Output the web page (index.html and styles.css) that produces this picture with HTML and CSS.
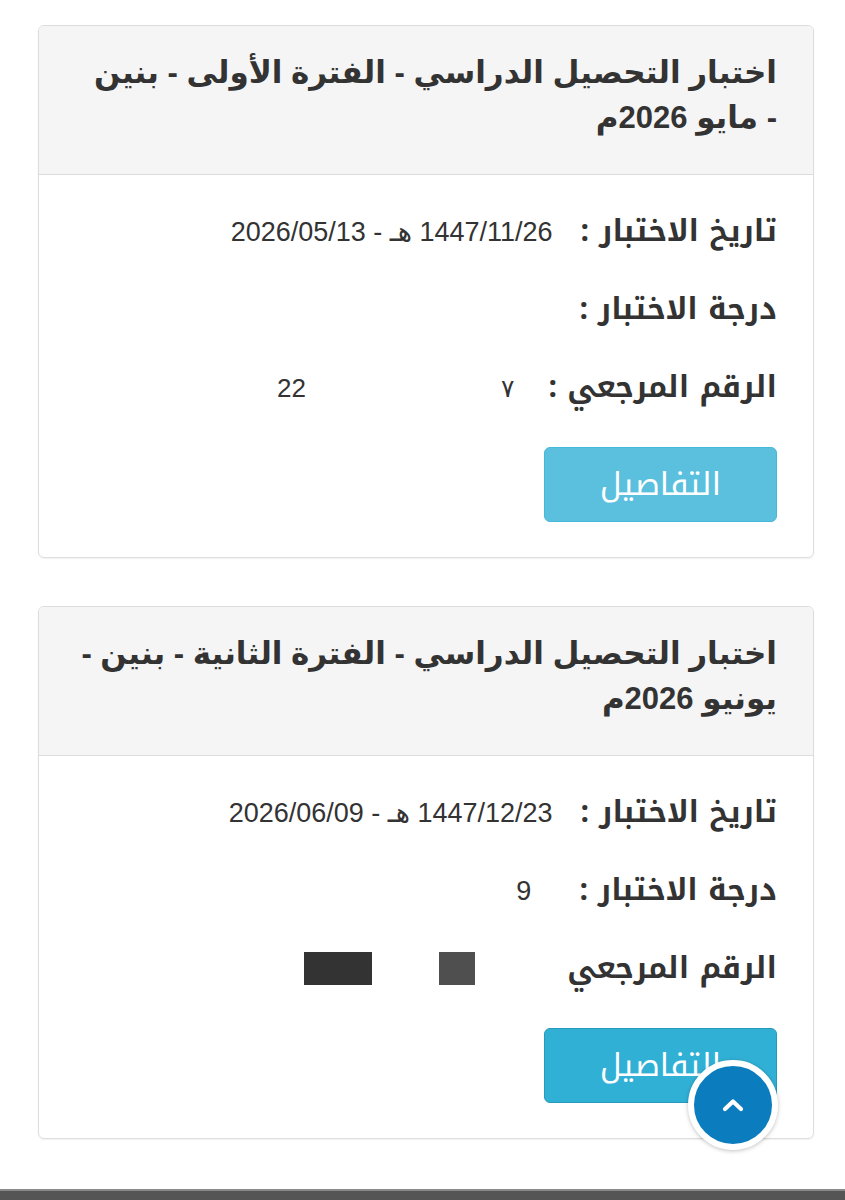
FILE: index.html
```html
<!DOCTYPE html>
<html lang="ar" dir="rtl">
<head>
<meta charset="utf-8">
<title>نتائج الاختبارات</title>
<link rel="stylesheet" href="styles.css">
</head>
<body>
<main class="page">
  <section class="card">
    <header class="card-head">
      <h3 class="card-title">اختبار التحصيل الدراسي - الفترة الأولى - بنين<br>- مايو 2026م</h3>
    </header>
    <div class="card-body">
      <div class="row"><span class="label">تاريخ الاختبار :</span><span class="value">1447/11/26 هـ - 2026/05/13</span></div>
      <div class="row"><span class="label">درجة الاختبار :</span><span class="value"></span></div>
      <div class="row"><span class="label">الرقم المرجعي :</span><span class="value ref"><span class="ref-a">٧</span><span class="ref-gap"></span><span class="ref-b">22</span></span></div>
      <div class="actions"><a class="btn" href="#">التفاصيل</a></div>
    </div>
  </section>

  <section class="card">
    <header class="card-head">
      <h3 class="card-title">اختبار التحصيل الدراسي - الفترة الثانية - بنين -<br>يونيو 2026م</h3>
    </header>
    <div class="card-body">
      <div class="row"><span class="label">تاريخ الاختبار :</span><span class="value">1447/12/23 هـ - 2026/06/09</span></div>
      <div class="row"><span class="label">درجة الاختبار :</span><span class="value grade">9</span></div>
      <div class="row"><span class="label">الرقم المرجعي</span><span class="value redact"><span class="blk blk-a"></span><span class="blk blk-b"></span></span></div>
      <div class="actions"><a class="btn btn-active" href="#">التفاصيل</a></div>
    </div>
  </section>
</main>
<footer class="footer"></footer>
<a class="to-top" href="#" aria-label="أعلى">
  <svg width="22" height="14" viewBox="0 0 22 14"><path d="M3 11 L11 3.5 L19 11" fill="none" stroke="#fff" stroke-width="4.2" stroke-linecap="round" stroke-linejoin="round"/></svg>
</a>
</body>
</html>
```

FILE: styles.css
```css
* { box-sizing: border-box; }
html, body { margin: 0; padding: 0; background: #fff; }
body {
  font-family: "Noto Kufi Arabic", "Noto Sans Arabic", "DejaVu Sans", sans-serif;
  color: #333;
}
.page {
  padding: 25px 31px 50px 38px;
  display: flex;
  flex-direction: column;
  gap: 48px;
}
.card {
  border: 1px solid #ddd;
  border-radius: 6px;
  overflow: hidden;
  box-shadow: 0 1px 2px rgba(0,0,0,0.06);
}
.card-head {
  background: #f5f5f5;
  border-bottom: 1px solid #ddd;
  padding: 24px 36px 0 30px;
  height: 149px;
}
.card-title {
  margin: 0;
  font-family: "Liberation Sans", "DejaVu Sans", sans-serif;
  font-size: 31px;
  font-weight: bold;
  line-height: 45px;
  color: #333;
  white-space: nowrap;
}
.card-body {
  padding: 17px 36px 35px;
  display: flex;
  flex-direction: column;
}
.row {
  display: flex;
  align-items: baseline;
  gap: 28px;
  line-height: 78px;
  height: 78px;
}
.label {
  font-size: 30px;
  font-weight: bold;
  color: #333;
}
.value {
  font-family: "Liberation Sans", "DejaVu Sans", sans-serif;
  font-size: 27px;
  color: #333;
}
.grade { margin-right: 20px; }
.ref { display: flex; align-items: baseline; margin-right: 6px; }
.ref-a { font-size: 25px; }
.ref-gap { width: 195px; }
.ref-b { display: inline-block; direction: ltr; font-size: 26px; }
.redact { display: flex; align-items: center; align-self: center; gap: 67px; margin-right: 64px; }
.blk { display: block; height: 33px; }
.blk-a { width: 36px; background: #4f4f4f; }
.blk-b { width: 68px; background: #333; }
.actions { display: flex; margin-top: 21px; }
.btn {
  display: inline-flex;
  align-items: center;
  justify-content: center;
  width: 233px;
  height: 75px;
  background: #5bc0de;
  border: 1px solid #46b8da;
  border-radius: 6px;
  color: #fff;
  font-size: 32px;
  text-decoration: none;
}
.btn-active { background: #31b0d5; border-color: #269abc; }
.footer {
  height: 11px;
  background: #555;
  border-top: 2px solid #8a8a8a;
}
.to-top {
  position: fixed;
  right: 67px;
  bottom: 50px;
  width: 90px;
  height: 90px;
  border-radius: 50%;
  background: #0b7cbe;
  border: 6px solid #fff;
  box-shadow: 0 1px 4px rgba(0,0,0,0.25);
  display: flex;
  align-items: center;
  justify-content: center;
}
```
